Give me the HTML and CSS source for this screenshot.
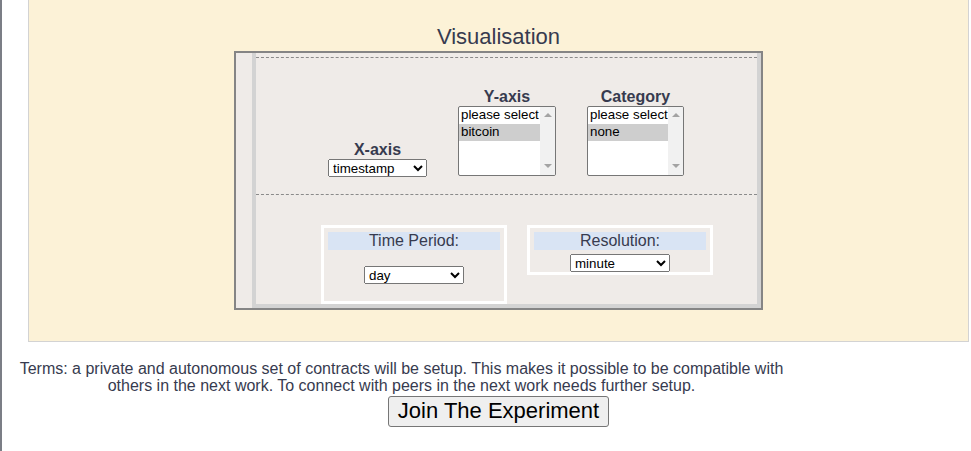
FILE: index.html
```html
<!DOCTYPE html>
<html lang="en">
<head>
<meta charset="utf-8">
<title>Visualisation</title>
<link rel="stylesheet" href="styles.css">
</head>
<body>
<div class="page">
  <div class="panel">
    <h2 class="title">Visualisation</h2>
    <div class="viz">
      <div class="viz-inner">
        <div class="axes">
          <div class="col col-x">
            <div class="axis-label">X-axis</div>
            <select class="dd"><option>timestamp</option></select>
          </div>
          <div class="col col-y">
            <div class="axis-label">Y-axis</div>
            <div class="listbox">
              <div class="lb-options">
                <div class="lb-opt">please select</div>
                <div class="lb-opt sel">bitcoin</div>
              </div>
              <div class="lb-scroll"><span class="arr-up"></span><span class="arr-down"></span></div>
            </div>
          </div>
          <div class="col col-cat">
            <div class="axis-label">Category</div>
            <div class="listbox">
              <div class="lb-options">
                <div class="lb-opt">please select</div>
                <div class="lb-opt sel">none</div>
              </div>
              <div class="lb-scroll"><span class="arr-up"></span><span class="arr-down"></span></div>
            </div>
          </div>
        </div>
        <div class="periods">
          <div class="pbox pbox-time">
            <div class="plabel">Time Period:</div>
            <select class="dd"><option>day</option></select>
          </div>
          <div class="pbox pbox-res">
            <div class="plabel">Resolution:</div>
            <select class="dd"><option>minute</option></select>
          </div>
        </div>
      </div>
    </div>
  </div>
  <p class="terms">Terms: a private and autonomous set of contracts will be setup. This makes it possible to be compatible with others in the next work. To connect with peers in the next work needs further setup.</p>
  <div class="join"><button class="join-btn" type="button">Join The Experiment</button></div>
</div>
</body>
</html>
```
FILE: styles.css
```css
html, body {
  margin: 0;
  padding: 0;
  background: #ffffff;
}
body {
  font-family: "Liberation Sans", Arial, sans-serif;
  color: #373b4f;
}
.page {
  border-left: 2px solid #7b7e86;
  min-height: 451px;
  box-sizing: border-box;
}
.panel {
  margin-left: 26px;
  width: 941px;
  height: 342px;
  box-sizing: border-box;
  background: #fcf2d7;
  border: 1px solid #d3d3d3;
  border-top: 0;
  padding-top: 24px;
}
.title {
  margin: 0;
  height: 27px;
  font-size: 22px;
  line-height: 25px;
  font-weight: normal;
  text-align: center;
}
.viz {
  width: 529px;
  height: 259px;
  margin: 0 auto;
  box-sizing: border-box;
  border: 2px solid #858585;
  background: #efebe8;
  padding-left: 16px;
}
.viz-inner {
  height: 255px;
  box-sizing: border-box;
  border: 4px solid #d3d3d3;
  border-top: 0;
  padding-top: 4px;
}
.axes {
  height: 138px;
  box-sizing: border-box;
  border-top: 1px dashed #8a8a8a;
  border-bottom: 1px dashed #8a8a8a;
  display: flex;
  justify-content: center;
  align-items: flex-end;
  gap: 31px;
  padding-bottom: 17px;
  padding-right: 1px;
}
.col-x { width: 99px; }
.col-y { width: 98px; }
.col-cat { width: 97px; }
.axis-label {
  font-size: 16px;
  line-height: 18px;
  font-weight: bold;
  text-align: center;
}
.dd {
  display: block;
  width: 100px;
  height: 18px;
  margin: 0;
  font-family: "Liberation Sans", Arial, sans-serif;
  font-size: 13.33px;
  color: #000;
}
.col-x .dd { width: 99px; }
.listbox {
  height: 70px;
  box-sizing: border-box;
  margin-bottom: 1px;
  border: 1px solid #767676;
  border-radius: 2px;
  background: #fff;
  display: flex;
  font-size: 13.33px;
  color: #000;
  overflow: hidden;
}
.lb-options {
  flex: 1;
  min-width: 0;
}
.lb-opt {
  height: 17px;
  line-height: 16px;
  padding-left: 2px;
  white-space: nowrap;
  overflow: hidden;
}
.lb-opt.sel {
  background: #cecece;
}
.lb-scroll {
  width: 15px;
  background: #f1f1f1;
  display: flex;
  flex-direction: column;
  justify-content: space-between;
  align-items: center;
  padding: 6px 0 7px;
  box-sizing: border-box;
}
.arr-up, .arr-down {
  width: 0;
  height: 0;
  border-left: 4px solid transparent;
  border-right: 4px solid transparent;
}
.arr-up { border-bottom: 4px solid #a3a3a3; }
.arr-down { border-top: 4px solid #a3a3a3; }
.periods {
  display: flex;
  align-items: flex-start;
  gap: 20px;
  padding: 30px 0 0 65px;
}
.pbox {
  width: 186px;
  box-sizing: border-box;
  border: 3px solid #ffffff;
  padding: 4px 4px 0;
}
.plabel {
  height: 18px;
  line-height: 18px;
  font-size: 16px;
  text-align: center;
  background: #d9e4f4;
}
.pbox .dd {
  margin: 4px auto 0;
}
.pbox-time .dd {
  margin-top: 16px;
}
.pbox-time {
  padding-bottom: 17px;
}
.terms {
  margin: 18px 0 0 6px;
  width: 787px;
  text-align: center;
  font-size: 16px;
  line-height: 17px;
}
.join {
  margin-left: 26px;
  width: 941px;
  padding-top: 2px;
  text-align: center;
}
.join-btn {
  height: 31px;
  padding: 0 9px 2px;
  font-family: "Liberation Sans", Arial, sans-serif;
  font-size: 22px;
  color: #000;
  background: #efefef;
  border: 1px solid #767676;
  border-radius: 3px;
}
```
